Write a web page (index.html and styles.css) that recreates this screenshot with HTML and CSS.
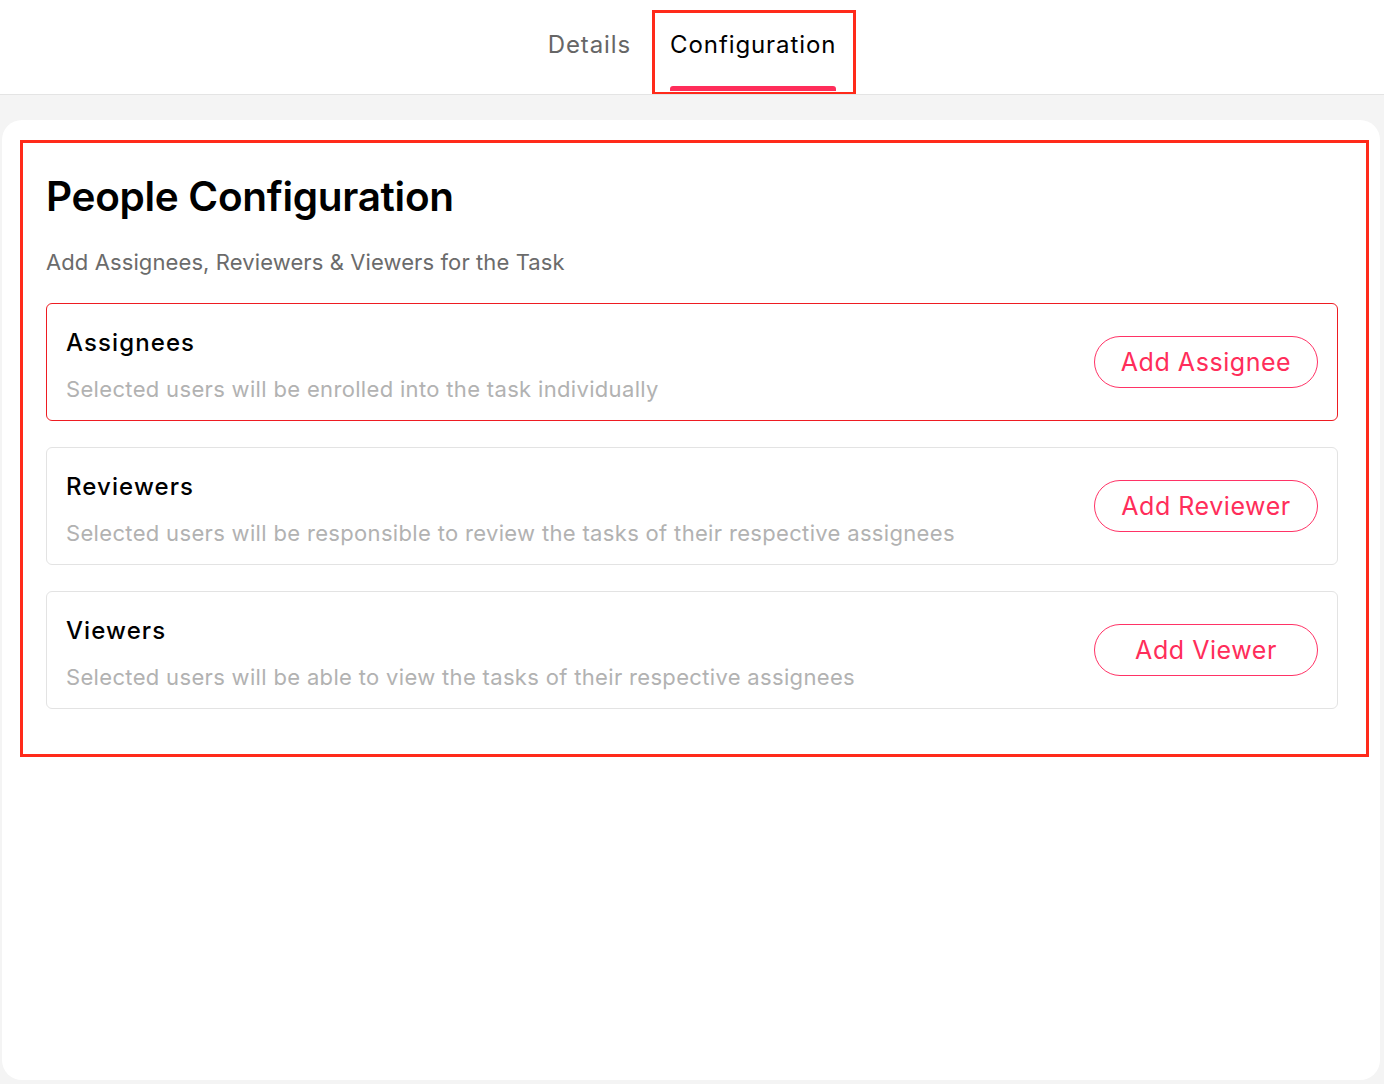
FILE: index.html
```html
<!DOCTYPE html>
<html>
<head>
<meta charset="utf-8">
<link rel="stylesheet" href="styles.css">
</head>
<body>
<header class="topbar">
  <nav class="tabs">
    <div class="tab">Details</div>
    <div class="tab tab-active">Configuration<span class="tab-bar"></span></div>
  </nav>
</header>
<main class="page">
  <section class="panel">
    <div class="frame">
      <h1 class="title">People Configuration</h1>
      <p class="subtitle">Add Assignees, Reviewers &amp; Viewers for the Task</p>
      <div class="list">
        <div class="row row-alert">
          <div class="row-text">
            <div class="row-title">Assignees</div>
            <div class="row-desc">Selected users will be enrolled into the task individually</div>
          </div>
          <button class="btn">Add Assignee</button>
        </div>
        <div class="row">
          <div class="row-text">
            <div class="row-title">Reviewers</div>
            <div class="row-desc">Selected users will be responsible to review the tasks of their respective assignees</div>
          </div>
          <button class="btn">Add Reviewer</button>
        </div>
        <div class="row">
          <div class="row-text">
            <div class="row-title">Viewers</div>
            <div class="row-desc">Selected users will be able to view the tasks of their respective assignees</div>
          </div>
          <button class="btn">Add Viewer</button>
        </div>
      </div>
    </div>
  </section>
</main>
</body>
</html>
```

FILE: styles.css
```css
* { box-sizing: border-box; }
html, body { margin: 0; padding: 0; }
body {
  width: 1384px;
  height: 1084px;
  overflow: hidden;
  background: #f4f4f4;
  font-family: Inter, "Noto Sans", sans-serif;
  color: #000;
}
.topbar {
  height: 95px;
  background: #fff;
  border-bottom: 1px solid #e4e4e4;
  display: flex;
  justify-content: center;
}
.tabs {
  display: flex;
  align-items: stretch;
  margin-left: 20px;
  margin-top: 10px;
}
.tab {
  position: relative;
  font-size: 24px;
  letter-spacing: 0.9px;
  color: #666;
  padding: 20px 21px 0 0;
  white-space: nowrap;
}
.tab-active {
  color: #000;
  border: 3px solid #ff2a1a;
  border-bottom-width: 2px;
  padding: 17px 17px 0 15px;
}
.tab-bar {
  position: absolute;
  left: 15px;
  right: 17px;
  bottom: 1px;
  height: 5px;
  border-radius: 3px 3px 0 0;
  background: #ff2d5a;
}
.page {
  padding: 25px 4px 4px 2px;
}
.panel {
  background: #fff;
  border-radius: 20px;
  height: 960px;
  padding: 20px 12px 0 18px;
}
.frame {
  border: 3px solid #ff2a1a;
  padding: 28px 28px 45px 23px;
  width: 1349px;
}
.title {
  margin: 0;
  font-size: 40.5px;
  font-weight: 600;
  line-height: 52px;
  letter-spacing: -0.3px;
}
.subtitle {
  margin: 24px 0 0;
  font-size: 22px;
  line-height: 30px;
  letter-spacing: 0.1px;
  color: #6b6b6b;
}
.list {
  margin-top: 26px;
  display: flex;
  flex-direction: column;
  gap: 26px;
  width: 1292px;
}
.row {
  height: 118px;
  border: 1px solid #e3e3e3;
  border-radius: 6px;
  display: flex;
  align-items: center;
  justify-content: space-between;
  padding: 0 19px 0 19px;
}
.row-alert { border-color: #ee1c22; }
.row-text {
  display: flex;
  flex-direction: column;
  gap: 16px;
  padding-top: 7px;
}
.row-title {
  font-size: 24px;
  font-weight: 500;
  line-height: 30px;
  letter-spacing: 1.1px;
}
.row-desc {
  font-size: 22px;
  line-height: 30px;
  letter-spacing: 0.33px;
  color: #b2b2b2;
}
.btn {
  width: 224px;
  height: 52px;
  border: 1px solid #ff3366;
  border-radius: 26px;
  background: #fff;
  color: #ff2d5a;
  font-family: inherit;
  font-size: 25px;
  letter-spacing: 0.55px;
  padding: 0;
}
```
